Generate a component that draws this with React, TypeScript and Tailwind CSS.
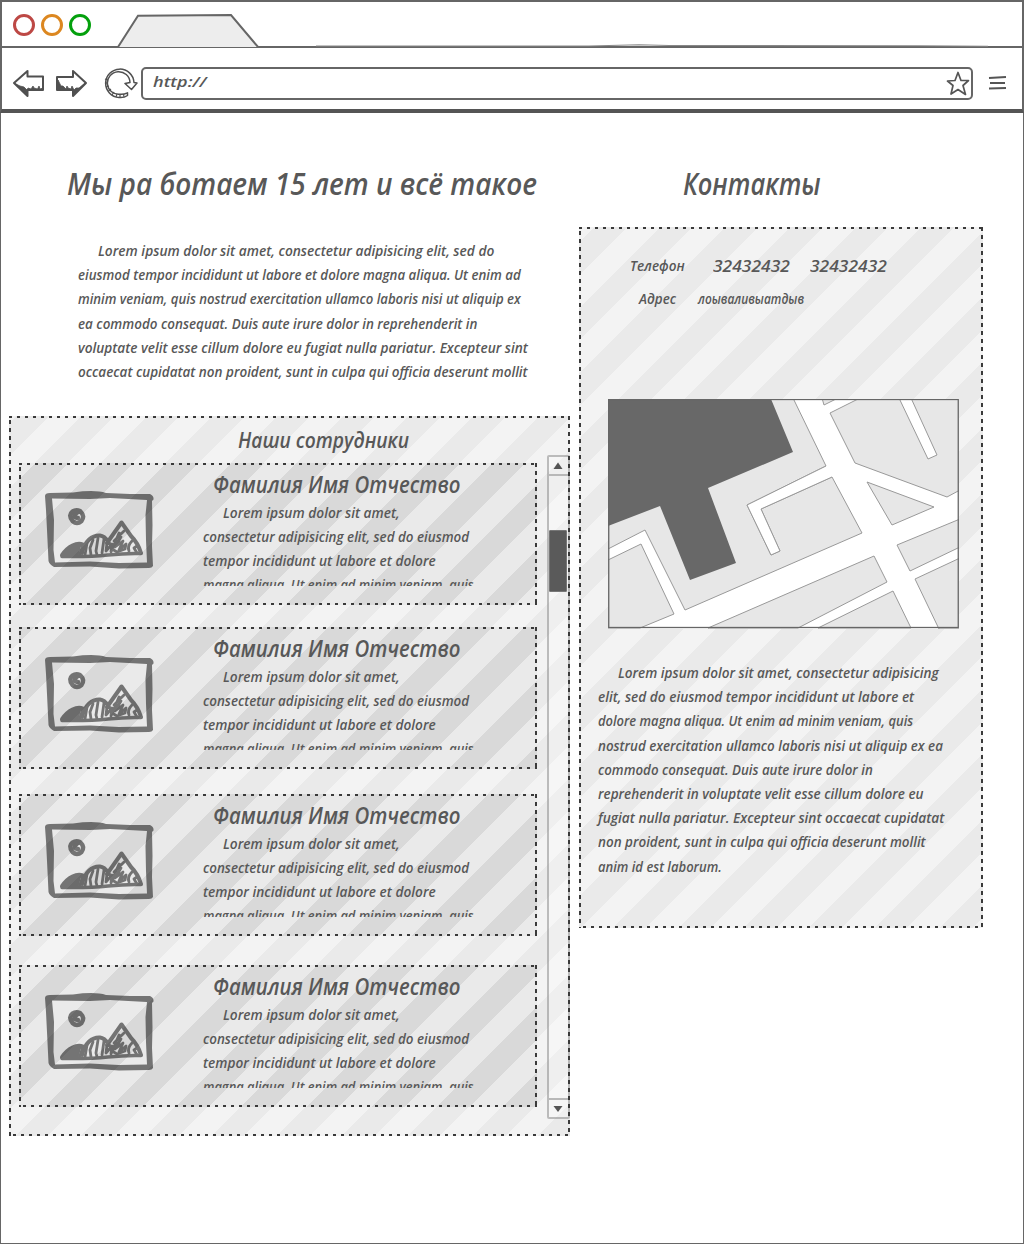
import { useLayoutEffect, useRef, type ReactNode } from "react";

function Line({ children, width, className = "" }: { children: ReactNode; width: number; className?: string }) {
  const ref = useRef<HTMLSpanElement>(null);
  useLayoutEffect(() => {
    const fit = () => {
      const el = ref.current;
      if (el && el.offsetWidth) el.style.transform = `scaleX(${width / el.offsetWidth})`;
    };
    fit();
    document.fonts?.ready.then(fit);
  }, [width]);
  return (
    <div className={`whitespace-nowrap ${className}`}>
      <span ref={ref} className="inline-block origin-left">{children}</span>
    </div>
  );
}

function Dashes() {
  return (
    <div className="pointer-events-none absolute inset-0">
      <div className="absolute inset-x-0 top-0 h-0.5 bg-[repeating-linear-gradient(90deg,#3a3a3a_0_3px,transparent_3px_8px)]" />
      <div className="absolute inset-x-0 bottom-0 h-0.5 bg-[repeating-linear-gradient(90deg,transparent_0_4px,#3a3a3a_4px_7px,transparent_7px_8px)]" />
      <div className="absolute inset-y-0 left-0 w-0.5 bg-[repeating-linear-gradient(180deg,transparent_0_4px,#3a3a3a_4px_8px)]" />
      <div className="absolute inset-y-0 right-0 w-0.5 bg-[repeating-linear-gradient(180deg,#3a3a3a_0_4px,transparent_4px_8px)]" />
    </div>
  );
}

function Picture() {
  return (
    <svg width="112" height="82" viewBox="43 489 112 82" fill="none" stroke="#000" strokeLinecap="round" strokeLinejoin="round" className="opacity-50">
      <path fill="#000" stroke="none" fillRule="evenodd" d="M45 496Q45 493 50 493L73 492.500Q95 489.500 106 493L130 494L150 494Q154 496 153.500 499.500L152 501L152.500 525L152 546L153 566Q152 568 149 568L119 568.500L90 566.500L54 567Q49 564 48.500 561L47 530L46 510ZM52 498.500L54 520L53.500 550L55 562.500L90 561.500L119 563L147 562.500L146 540L145.500 515L147 500L110 498L90 499Z" />
      <path strokeWidth="4.400" d="M78 518Q74 518 75 515Q77 510.500 81 512Q85 516 81.500 521Q77 525 72.500 521Q68 515 72.500 511.500Q76 509 80 511" />
      <path strokeWidth="4" d="M62 555C68 546 77 542 83 544.500M82 553C85 541 92 535 100 535.500C105 536 107 540 109 543M107 543L121.500 522.500L131 536Q138 543 141 553" />
      <path strokeWidth="3.500" d="M62 556.500Q90 557 108 555T141 553.500" />
      <path fill="#000" stroke="none" d="M62 556Q70 543 82 543L78 557Z" />
      <path strokeWidth="2.800" d="M77 546L74 555M83 545L79 556M87 543L85 555M93 540L90 548L91 555M98 538L96 551L97 555M104 539L102 553M107 543L106 551L112 544L111 552L119 533L121 537L115 547L123 541L119 550L126 544L125 549L117 552L112 549M124 531L114 541M132 541Q127 546 129 551M137 546L134 548L137 553" />
    </svg>
  );
}

const intro: [string, number, number][] = [
  ["Lorem ipsum dolor sit amet, consectetur adipisicing elit, sed do", 396, 1],
  ["eiusmod tempor incididunt ut labore et dolore magna aliqua. Ut enim ad", 443, 0],
  ["minim veniam, quis nostrud exercitation ullamco laboris nisi ut aliquip ex", 443, 0],
  ["ea commodo consequat. Duis aute irure dolor in reprehenderit in", 399, 0],
  ["voluptate velit esse cillum dolore eu fugiat nulla pariatur. Excepteur sint", 450, 0],
  ["occaecat cupidatat non proident, sunt in culpa qui officia deserunt mollit", 450, 0],
];
const about: [string, number, number][] = [
  ["Lorem ipsum dolor sit amet, consectetur adipisicing", 321, 1],
  ["elit, sed do eiusmod tempor incididunt ut labore et", 316, 0],
  ["dolore magna aliqua. Ut enim ad minim veniam, quis", 315, 0],
  ["nostrud exercitation ullamco laboris nisi ut aliquip ex ea", 345, 0],
  ["commodo consequat. Duis aute irure dolor in", 275, 0],
  ["reprehenderit in voluptate velit esse cillum dolore eu", 326, 0],
  ["fugiat nulla pariatur. Excepteur sint occaecat cupidatat", 346, 0],
  ["non proident, sunt in culpa qui officia deserunt mollit", 328, 0],
  ["anim id est laborum.", 124, 0],
];
const bio: [string, number, number][] = [
  ["Lorem ipsum dolor sit amet,", 177, 1],
  ["consectetur adipisicing elit, sed do eiusmod", 266, 0],
  ["tempor incididunt ut labore et dolore", 233, 0],
  ["magna aliqua. Ut enim ad minim veniam, quis", 271, 0],
];

function Paragraph({ lines }: { lines: [string, number, number][] }) {
  return (
    <div className="text-[14.5px] leading-[24.2px]">
      {lines.map(([t, w, indent]) => (
        <Line key={t} width={w} className={indent ? "pl-5" : ""}>{t}</Line>
      ))}
    </div>
  );
}

function Card({ className }: { className: string }) {
  return (
    <article className={`relative flex h-[142px] w-[518px] shrink-0 ${className}`}>
      <div className="w-[184px] shrink-0 pt-[26px] pl-6"><Picture /></div>
      <div className="pt-1">
        <Line width={247} className="h-[33.5px] pl-[10px] text-[24px] leading-[33px]">Фамилия Имя Отчество</Line>
        <div className="h-[85px] overflow-hidden"><Paragraph lines={bio} /></div>
      </div>
      <Dashes />
    </article>
  );
}

function MapView() {
  return (
    <svg width="351" height="230" viewBox="608 399 351 230" className="block" stroke="#999" strokeWidth="1">
      <rect x="608" y="399" width="351" height="230" fill="#fff" stroke="none" />
      <g fill="#e7e7e7">
        <path d="M608 398H793L826 466L747 505L771 555L780 551L761 509L832 477L862 533L685 610L645 530L608 549Z" />
        <path fill="#fff" d="M747 505L826 466L832 477L761 509L780 551L771 555Z" stroke="none" />
        <path fill="none" d="M826 466L747 505L771 555L780 551L761 509L832 477" />
        <path d="M608 560L641 544L674 614L640 628H608Z" />
        <path d="M822 398L824 405L838 398ZM860 398L830 413L855 463L947 497L960 490V398H911L937 455L928 459L899 398Z" />
        <path d="M867 482L934 507L892 525Z" />
        <path d="M960 519L897 545L910 571L960 547Z" />
        <path d="M708 628L874 556L887 582L798 628Z" />
        <path d="M818 628L893 591L911 628ZM960 558L915 579L939 629H960Z" />
      </g>
      <path fill="#686868" stroke="none" d="M608 399H771L793 452L708 488L736 563L690 580L660 506L608 526Z" />
      <rect x="608.75" y="399.5" width="349.5" height="228" fill="none" stroke="#666" strokeWidth="1.300" />
    </svg>
  );
}

function Scrollbar() {
  return (
    <div className="absolute top-[39px] right-0 flex h-[664px] w-[23px] flex-col rounded-[2px] border-2 border-[#808080]/50 bg-white/25">
      <div className="flex h-[19px] items-center justify-center border-b-2 border-[#b8b8b8]">
        <svg width="10" height="8" className="mr-0.5"><path d="M0.5 7L5 0.5L9.5 7Z" fill="#555" /></svg>
      </div>
      <div className="mt-[54px] h-[62px] w-[18px] rounded-[1px] border border-[#777] bg-[#5a5a5a]" />
      <div className="mt-auto flex h-[19px] items-center justify-center border-t-2 border-[#b8b8b8]">
        <svg width="10" height="8" className="mr-0.5"><path d="M0.5 1L5 7L9.5 1Z" fill="#555" /></svg>
      </div>
    </div>
  );
}

function Browser() {
  return (
    <header className="h-[113px] border-x-2 border-t-2 border-b-4 border-x-[#666] border-t-[#666] border-b-[#555]">
      <div className="flex h-[46px] items-end border-b-2 border-[#666]">
        <div className="mb-[10px] ml-[11px] flex gap-[6px]">
          <i className="size-[22px] rounded-full border-[3px] border-[#bd4845]" />
          <i className="size-[22px] rounded-full border-[3px] border-[#dc8720]" />
          <i className="size-[22px] rounded-full border-[3px] border-[#04a00d]" />
        </div>
        <svg width="142" height="33" viewBox="117 14 142 33" className="ml-[26px] -mb-px shrink-0">
          <path d="M118 47L138 15.8L231 15L258 47" fill="#ededed" stroke="#666" strokeWidth="2" />
        </svg>
        <svg width="672" height="4" viewBox="317 43 672 4" className="ml-[57px] -mb-px shrink-0">
          <path d="M317 46L590 46L610 45.500L640 44.7L670 45.500L920 45.8L989 46.200" fill="none" stroke="#888" strokeWidth="1.1" />
        </svg>
      </div>
      <div className="flex h-[61px] items-center pt-[9px]">
        <svg width="128" height="36" viewBox="10 65 128 36" className="ml-2 shrink-0" fill="none" stroke="#505050" strokeWidth="2" strokeLinejoin="round">
          <path d="M14 83L27.500 71V76.500H43V90H27.500V96Z" />
          <path d="M14 83L27.500 96V90H43V88L40 89L39 86L37.500 89L34 88L33 86L31 89L28 88L27 90L24 87L20 86Z" fill="#505050" strokeWidth="0.800" />
          <path d="M86 83L73 71V77H57V90H73V96Z" />
          <path d="M58 80V90H73V95L85 83L79 88L76 88L74 90L72 86L71 89L68 88L67 86L66 89L63 86L61 86Z" fill="#505050" strokeWidth="0.800" />
          <path strokeWidth="1.500" d="M127.500 92.800Q124 94.500 120 94.200A11.300 11.300 0 1 1 130 82.500L125 83.500L131.500 89.500L137 83L134 82.500A14.200 14.200 0 1 0 119 97.500Q124 98 127.500 95.500Z" />
          <path strokeWidth="1.200" d="M105 79L108 80M105 83L108 83M106 87L109 86M108.500 91L111 89M112 95L114 92M116 97L117 94M120 97L120 94M124 97L123.500 94" />
        </svg>
        <div className="ml-[3px] flex h-[33px] w-[832px] shrink-0 items-center justify-between rounded-[5px] border-2 border-[#666] pr-px pl-2.5">
          <Line width={53} className="-mt-1 text-[15px] leading-5 font-semibold">http://</Line>
          <svg width="24" height="25" viewBox="946 70 24 25" fill="none" stroke="#555" strokeWidth="1.7" strokeLinejoin="round">
            <path d="M958 71.500L961 79.500H968.500L963 84.500L965.500 93.500L958 88.500L951 93L953 84.500L947.500 80L955 79.500Z" />
          </svg>
        </div>
        <svg width="20" height="16" viewBox="988 75 20 16" fill="none" stroke="#555" strokeWidth="2" className="ml-[15px] shrink-0">
          <path d="M989 78L1006 77M990 83H1005M989 88.500L1006 88" />
        </svg>
      </div>
    </header>
  );
}

export default function App() {
  return (
    <div className="h-[1244px] w-[1024px] overflow-hidden bg-white font-['Open_Sans','Noto_Sans',sans-serif] font-semibold text-[#585858] italic">
      <Browser />
      <main className="flex h-[1131px] items-start border border-t-0 border-[#666]">
        <section className="w-[570px] shrink-0 pl-2">
          <Line width={470} className="mt-[45px] ml-[58px] h-[51px] text-[31px] leading-[50px]">Мы ра ботаем 15 лет и всё такое</Line>
          <div className="mt-[30px] ml-[69px] h-[145px]"><Paragraph lines={intro} /></div>
          <div className="relative mt-[32px] flex h-[720px] w-[561px] flex-col bg-[repeating-linear-gradient(135deg,#eaeaea_5.2px_28.3px,#f3f3f3_28.3px_51.4px)] pl-[10px]">
            <Line width={171} className="h-[47px] shrink-0 pl-[219px] text-[22px] leading-[46px]">Наши сотрудники</Line>
            <Card className="bg-[repeating-linear-gradient(135deg,#d9d9d9_11.6px_34.7px,#eaeaea_34.7px_57.8px)]" />
            <Card className="mt-[22px] bg-[repeating-linear-gradient(135deg,#d9d9d9_34.2px_57.3px,#eaeaea_57.3px_80.4px)]" />
            <Card className="mt-[25px] bg-[repeating-linear-gradient(135deg,#d9d9d9_8.5px_31.6px,#eaeaea_31.6px_54.7px)]" />
            <Card className="mt-[29px] bg-[repeating-linear-gradient(135deg,#d9d9d9_26.2px_49.3px,#eaeaea_49.3px_72.4px)]" />
            <Scrollbar />
            <Dashes />
          </div>
        </section>
        <section className="pl-2">
          <Line width={138} className="mt-[45px] ml-[104px] h-[49px] text-[31px] leading-[50px]">Контакты</Line>
          <div className="relative mt-[20px] h-[701px] w-[404px] bg-[repeating-linear-gradient(135deg,#eaeaea_11.3px_34.4px,#f3f3f3_34.4px_57.5px)] pt-[22px]">
            <div className="flex h-[33px] pl-[51px] text-[14.5px] leading-[34px]">
              <Line width={55} className="w-[83px]">Телефон</Line>
              <Line width={77} className="w-[97px] text-[17px] leading-[33px]">32432432</Line>
              <Line width={77} className="text-[17px] leading-[33px]">32432432</Line>
            </div>
            <div className="flex h-[33px] pl-[60px] text-[14.5px] leading-[34px]">
              <Line width={37} className="w-[59px]">Адрес</Line>
              <Line width={106}>лоываливыатдыв</Line>
            </div>
            <div className="mt-[84px] ml-[29px]"><MapView /></div>
            <div className="mt-[32px] ml-[19px]"><Paragraph lines={about} /></div>
            <Dashes />
          </div>
        </section>
      </main>
    </div>
  );
}
